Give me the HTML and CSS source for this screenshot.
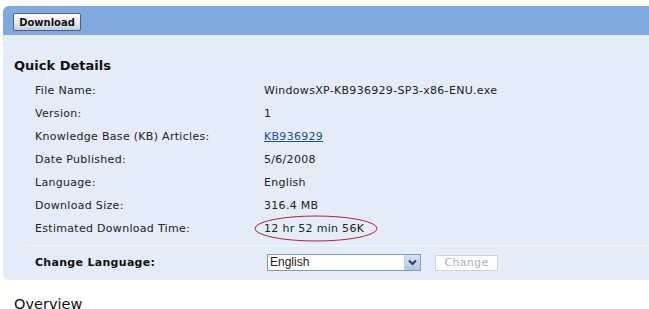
FILE: index.html
```html
<!DOCTYPE html>
<html lang="en">
<head>
    <meta charset="utf-8">
    <title>Download details</title>
    <link rel="stylesheet" href="styles.css">
</head>
<body>
    <div class="panel">
        <div class="panel-head">
            <button class="btn-download">Download</button>
        </div>
        <div class="panel-body">
            <h2>Quick Details</h2>
            <dl class="details">
                <dt>File Name:</dt>
                <dd>WindowsXP-KB936929-SP3-x86-ENU.exe</dd>
                <dt>Version:</dt>
                <dd>1</dd>
                <dt>Knowledge Base (KB) Articles:</dt>
                <dd><a href="#">KB936929</a></dd>
                <dt>Date Published:</dt>
                <dd>5/6/2008</dd>
                <dt>Language:</dt>
                <dd>English</dd>
                <dt>Download Size:</dt>
                <dd>316.4 MB</dd>
                <dt>Estimated Download Time:</dt>
                <dd class="marked">12 hr 52 min 56K
                    <svg class="circle" width="125" height="27" viewBox="0 0 125 27">
                        <ellipse cx="62" cy="13.5" rx="61" ry="12.5" fill="none" stroke="#b2233c" stroke-width="1"/>
                    </svg>
                </dd>
            </dl>
            <div class="change-row">
                <span class="change-label">Change Language:</span>
                <div class="select">
                    <span class="select-value">English</span>
                    <span class="select-arrow">
                        <svg width="9" height="7" viewBox="0 0 9 7"><path d="M1 1.5 L4.5 5 L8 1.5" fill="none" stroke="#2a3f73" stroke-width="2"/></svg>
                    </span>
                </div>
                <button class="btn-change" disabled>Change</button>
            </div>
        </div>
    </div>
    <h2 class="overview">Overview</h2>
</body>
</html>
```

FILE: styles.css
```css
html, body {
    margin: 0;
    padding: 0;
    overflow: hidden;
    background: #fff;
}
body {
    font-family: "DejaVu Sans", Verdana, sans-serif;
    font-size: 11px;
    color: #222;
    width: 649px;
    height: 309px;
}
.panel {
    margin: 6px 0 0 3px;
    width: 680px;
    border-radius: 6px 0 0 6px;
    overflow: hidden;
    background: #e3ecf7;
}
.panel-head {
    height: 29px;
    background: #80aadf;
    padding: 7px 0 0 10px;
    box-sizing: border-box;
}
.btn-download {
    display: block;
    width: 68px;
    height: 18px;
    padding: 0;
    border: 1px solid #4d6080;
    border-radius: 2px;
    background: linear-gradient(#ffffff, #e6e9ee 55%, #c7ccd6);
    font: bold 10px "DejaVu Sans", Verdana, sans-serif;
    color: #111;
}
.panel-body {
    padding: 19px 0 0 0;
}
.panel-body h2 {
    margin: 0 0 2px 11px;
    font-size: 13px;
    line-height: 23px;
    font-weight: bold;
    color: #111;
}
.details {
    display: grid;
    grid-template-columns: 229px auto;
    grid-auto-rows: 23px;
    margin: 0;
    padding-left: 32px;
    letter-spacing: 0.3px;
}
.details dt,
.details dd {
    margin: 0;
    line-height: 23px;
    white-space: nowrap;
}
.details a {
    color: #1d4d9c;
    text-decoration: underline;
}
.marked {
    position: relative;
}
.circle {
    position: absolute;
    left: -10px;
    top: -2px;
}
.change-row {
    display: flex;
    align-items: center;
    margin: 5px 0 0 24px;
    padding: 8px 0 9px 8px;
    border-top: 1px solid #f2f6fb;
}
.change-label {
    width: 232px;
    font-weight: bold;
    font-size: 11px;
    letter-spacing: 0.3px;
    color: #111;
}
.select {
    display: flex;
    width: 154px;
    height: 17px;
    box-sizing: border-box;
    border: 1px solid #7f9db9;
    background: #fff;
}
.select-value {
    flex: 1;
    font-family: "Liberation Sans", Arial, sans-serif;
    font-size: 12px;
    line-height: 15px;
    padding-left: 2px;
}
.select-arrow {
    width: 15px;
    display: flex;
    align-items: center;
    justify-content: center;
    background: linear-gradient(#d8e2f3, #b4c6e6);
    border-left: 1px solid #c3d3fd;
}
.btn-change {
    margin-left: 14px;
    width: 63px;
    height: 16px;
    padding: 0;
    border: 1px solid #c9d3df;
    background: #fff;
    color: #a9b2bd;
    font: 11px "DejaVu Sans", Verdana, sans-serif;
    letter-spacing: 0.3px;
}
.overview {
    margin: 14px 0 0 14px;
    font-size: 14.5px;
    font-weight: normal;
    line-height: 20px;
    color: #111;
}
```
